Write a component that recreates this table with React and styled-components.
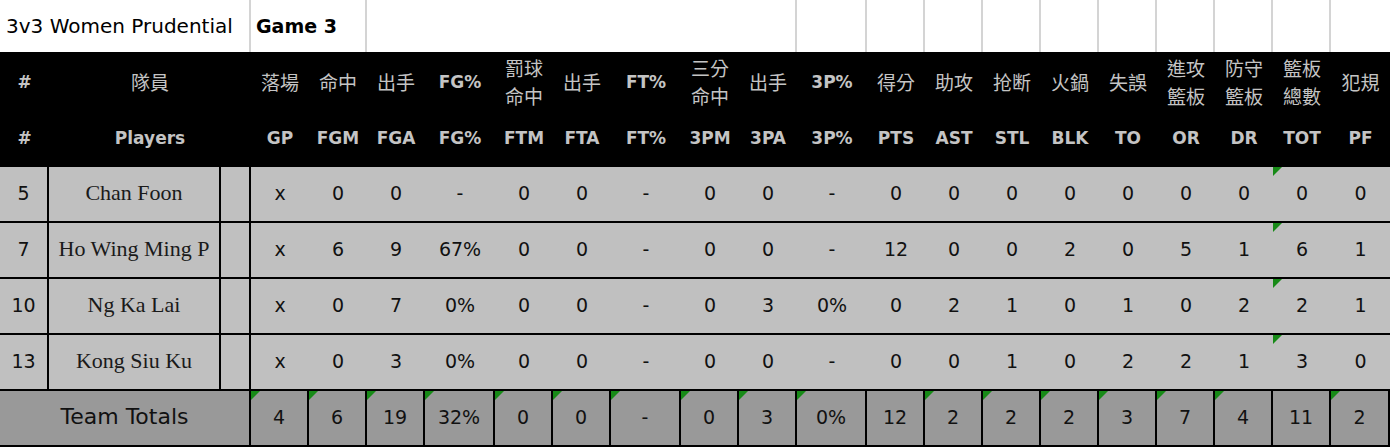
import React from "react";
import styled, { createGlobalStyle, css } from "styled-components";

const GlobalStyle = createGlobalStyle`
  html, body {
    margin: 0;
    padding: 0;
    background: #ffffff;
  }
  body {
    font-family: "DejaVu Sans", Verdana, sans-serif;
  }
`;

// # | players | blank | GP FGM FGA FG% | FTM FTA FT% | 3PM 3PA 3P% | PTS AST STL BLK TO OR DR TOT PF
const COLS =
  "49px 172px 30px 58px 58px 58px 70px 58px 58px 70px 58px 58px 70px 58px 58px 58px 58px 58px 58px 58px 58px 1fr";

const Sheet = styled.div`
  width: 1390px;
  overflow: hidden;
`;

const TitleRow = styled.div`
  display: grid;
  grid-template-columns: ${COLS};
  height: 52px;
`;

const TitleCell = styled.div`
  grid-column: ${(p) => p.$span || "auto"};
  display: flex;
  align-items: center;
  padding-left: ${(p) => p.$pad || 0}px;
  border-right: ${(p) => (p.$noLine ? "none" : "2px solid #d4d4d4")};
  box-sizing: border-box;
  font-size: ${(p) => (p.$bold ? "19px" : "20px")};
  font-weight: ${(p) => (p.$bold ? 700 : 400)};
  color: #000;
  white-space: nowrap;
`;

const Header = styled.div`
  display: grid;
  grid-template-columns: ${COLS};
  background: #000;
  padding-bottom: 4px;
`;

const HeadCell = styled.div`
  grid-column: ${(p) => p.$span || "auto"};
  display: grid;
  grid-template-rows: 60px 51px;
  color: #c4c4c4;
  text-align: center;
`;

const HeadTop = styled.div`
  display: flex;
  flex-direction: column;
  align-items: center;
  justify-content: center;
  font-family: ${(p) =>
    p.$latin
      ? '"DejaVu Sans", Verdana, sans-serif'
      : '"Noto Sans CJK TC", "Noto Sans CJK SC", sans-serif'};
  font-weight: ${(p) => (p.$latin ? 700 : 400)};
  font-size: ${(p) => (p.$latin ? "17px" : "19px")};
  line-height: 28px;
  white-space: nowrap;
`;

const HeadBottom = styled.div`
  display: flex;
  align-items: center;
  justify-content: center;
  font-weight: 700;
  font-size: 17px;
  white-space: nowrap;
`;

const Row = styled.div`
  display: grid;
  grid-template-columns: ${COLS};
  height: 56px;
  box-sizing: border-box;
  background: ${(p) => (p.$total ? "#999999" : "#c0c0c0")};
  border-bottom: 2px solid #000;
`;

const flag = css`
  &::before {
    content: "";
    position: absolute;
    top: 0;
    left: 0;
    border-top: 9px solid #178a17;
    border-right: 9px solid transparent;
  }
`;

const Cell = styled.div`
  position: relative;
  grid-column: ${(p) => p.$span || "auto"};
  display: flex;
  align-items: center;
  justify-content: center;
  padding-bottom: 3px;
  box-sizing: border-box;
  border-right: ${(p) => (p.$line ? "2px solid #000" : "none")};
  font-size: 19px;
  color: #111;
  white-space: nowrap;
  ${(p) => p.$flag && flag}
`;

const Name = styled(Cell)`
  font-family: "Liberation Serif", "Times New Roman", serif;
  font-size: 22px;
  color: #1a1a1a;
`;

const TotalLabel = styled(Cell)`
  font-size: 22px;
`;

const stats = [
  { zh: ["落場"], en: "GP" },
  { zh: ["命中"], en: "FGM" },
  { zh: ["出手"], en: "FGA" },
  { zh: ["FG%"], en: "FG%", latin: true },
  { zh: ["罰球", "命中"], en: "FTM" },
  { zh: ["出手"], en: "FTA" },
  { zh: ["FT%"], en: "FT%", latin: true },
  { zh: ["三分", "命中"], en: "3PM" },
  { zh: ["出手"], en: "3PA" },
  { zh: ["3P%"], en: "3P%", latin: true },
  { zh: ["得分"], en: "PTS" },
  { zh: ["助攻"], en: "AST" },
  { zh: ["抢断"], en: "STL" },
  { zh: ["火鍋"], en: "BLK" },
  { zh: ["失誤"], en: "TO" },
  { zh: ["進攻", "籃板"], en: "OR" },
  { zh: ["防守", "籃板"], en: "DR" },
  { zh: ["籃板", "總數"], en: "TOT" },
  { zh: ["犯規"], en: "PF" },
];

const players = [
  { no: "5", name: "Chan Foon", vals: ["x", 0, 0, "-", 0, 0, "-", 0, 0, "-", 0, 0, 0, 0, 0, 0, 0, 0, 0] },
  { no: "7", name: "Ho Wing Ming P", vals: ["x", 6, 9, "67%", 0, 0, "-", 0, 0, "-", 12, 0, 0, 2, 0, 5, 1, 6, 1] },
  { no: "10", name: "Ng Ka Lai", vals: ["x", 0, 7, "0%", 0, 0, "-", 0, 3, "0%", 0, 2, 1, 0, 1, 0, 2, 2, 1] },
  { no: "13", name: "Kong Siu Ku", vals: ["x", 0, 3, "0%", 0, 0, "-", 0, 0, "-", 0, 0, 1, 0, 2, 2, 1, 3, 0] },
];

const totals = [4, 6, 19, "32%", 0, 0, "-", 0, 3, "0%", 12, 2, 2, 2, 3, 7, 4, 11, 2];
const TOT_COL = 17;
const PTS_COL = 10;

export default function App() {
  return (
    <>
      <GlobalStyle />
      <Sheet>
        <TitleRow>
          <TitleCell $span="1 / 4" $pad={6}>3v3 Women Prudential</TitleCell>
          <TitleCell $span="4 / 6" $pad={5} $bold>Game 3</TitleCell>
          <TitleCell $span="6 / 13" />
          {Array.from({ length: 9 }).map((_, i) => (
            <TitleCell key={i} />
          ))}
          <TitleCell $noLine />
        </TitleRow>

        <Header>
          <HeadCell>
            <HeadTop $latin>#</HeadTop>
            <HeadBottom>#</HeadBottom>
          </HeadCell>
          <HeadCell $span="2 / 4">
            <HeadTop>隊員</HeadTop>
            <HeadBottom>Players</HeadBottom>
          </HeadCell>
          {stats.map((s) => (
            <HeadCell key={s.en}>
              <HeadTop $latin={s.latin}>
                {s.zh.map((line) => (
                  <span key={line}>{line}</span>
                ))}
              </HeadTop>
              <HeadBottom>{s.en}</HeadBottom>
            </HeadCell>
          ))}
        </Header>

        {players.map((p) => (
          <Row key={p.no}>
            <Cell $line>{p.no}</Cell>
            <Name $line>{p.name}</Name>
            <Cell $line />
            {p.vals.map((v, i) => (
              <Cell key={i} $flag={i === TOT_COL}>
                {v}
              </Cell>
            ))}
          </Row>
        ))}

        <Row $total>
          <TotalLabel $span="1 / 4" $line>Team Totals</TotalLabel>
          {totals.map((v, i) => (
            <Cell key={i} $line $flag={i !== TOT_COL && i !== PTS_COL}>
              {v}
            </Cell>
          ))}
        </Row>
      </Sheet>
    </>
  );
}
